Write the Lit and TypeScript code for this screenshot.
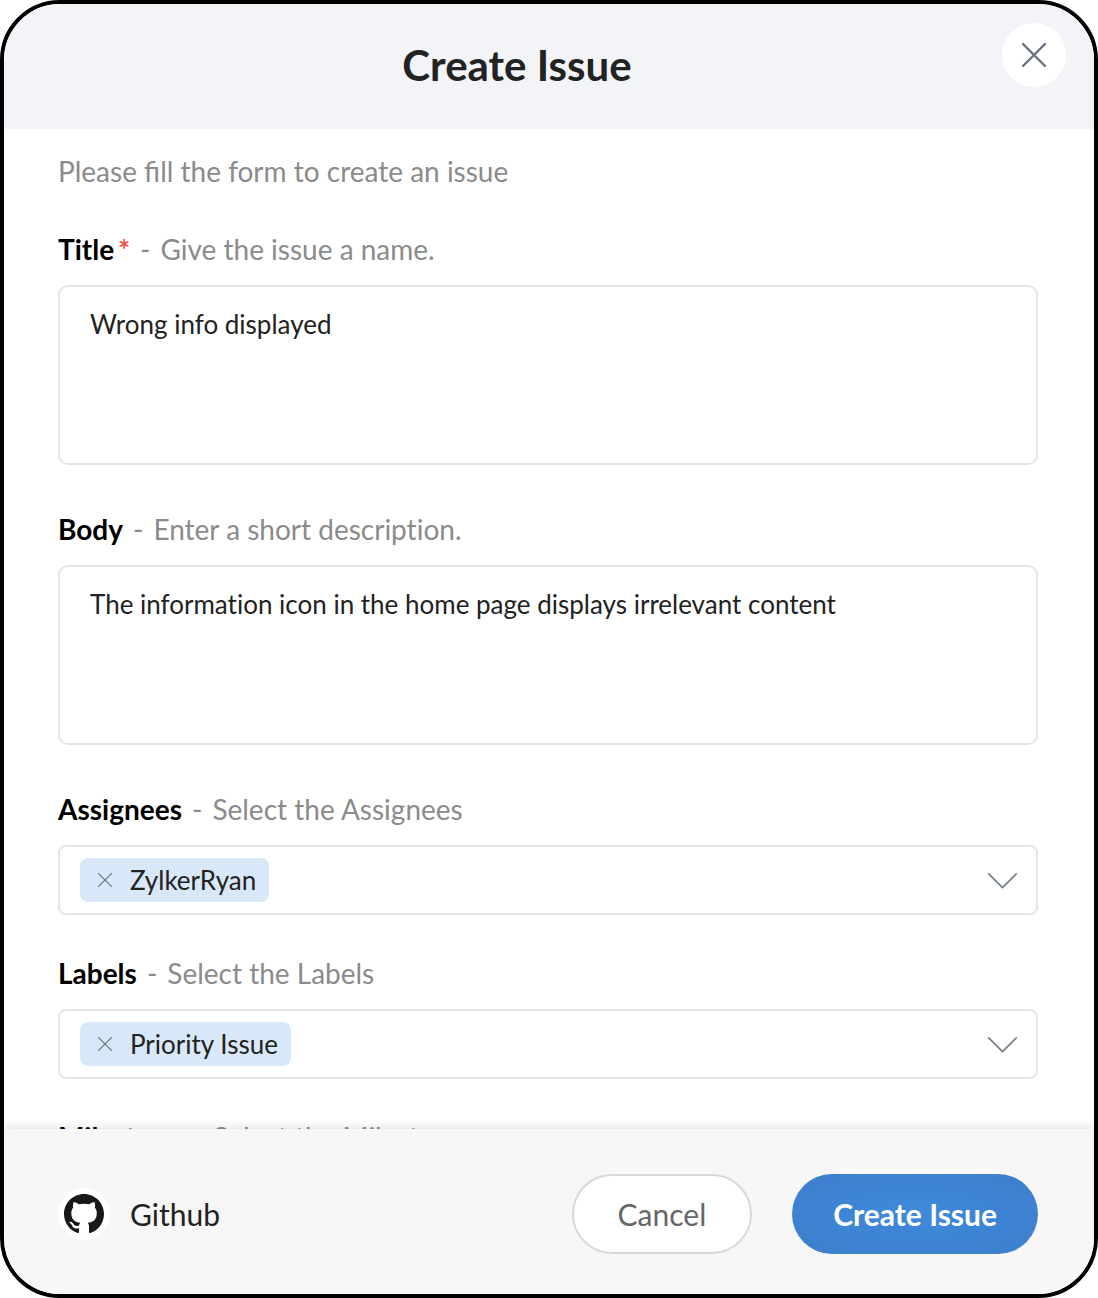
import { LitElement, html, css, svg } from "lit";
import { customElement, property, state } from "lit/decorators.js";

const crossIcon = (size: number, stroke: number) => svg`
  <svg width=${size} height=${size} viewBox="0 0 24 24" fill="none" stroke="currentColor"
    stroke-width=${stroke} stroke-linecap="round" aria-hidden="true">
    <path d="M1 1L23 23M23 1L1 23" />
  </svg>`;

/** Heading of a field: bold name, optional asterisk, grey hint. */
const labelStyles = css`
  :host {
    display: block;
    font-variant-ligatures: no-common-ligatures;
  }
  .label {
    display: block;
    margin-bottom: 18px;
    font-size: 28px;
    line-height: 36px;
    color: #8b8b8b;
  }
  .name {
    color: #000;
    font-weight: 700;
  }
  .star {
    margin-left: 4px;
    color: #ef5350;
    font-weight: 700;
  }
  .dash {
    margin: 0 10px;
  }
`;

const labelText = (name: string, hint: string, required = false) => html`
  <span class="name">${name}</span>${required ? html`<span class="star">*</span>` : ""}<span
    class="dash">-</span><span>${hint}</span>
`;

@customElement("text-field")
export class TextField extends LitElement {
  @property() name = "";
  @property() hint = "";
  @property() value = "";
  @property({ type: Boolean }) required = false;

  static styles = [
    labelStyles,
    css`
      .box {
        display: block;
        box-sizing: border-box;
        width: 100%;
        height: 180px;
        margin: 0;
        padding: 20px 30px;
        border: 2px solid #e5e5e5;
        border-radius: 10px;
        outline: none;
        resize: none;
        background: #fff;
        color: #222;
        font-family: inherit;
        font-size: 26px;
        font-variant-ligatures: inherit;
        line-height: 34px;
      }
      .box:focus-visible {
        border-color: #3f86d8;
      }
    `,
  ];

  render() {
    return html`
      <label class="label" for="control">${labelText(this.name, this.hint, this.required)}</label>
      <textarea class="box" id="control" ?required=${this.required} .value=${this.value}></textarea>
    `;
  }
}

@customElement("chip-select")
export class ChipSelect extends LitElement {
  @property() name = "";
  @property() hint = "";
  @property({ attribute: false }) options: string[] = [];
  @property({ attribute: false }) chosen: string[] = [];

  static styles = [
    labelStyles,
    css`
      .field {
        display: flex;
        align-items: center;
        gap: 10px;
        min-height: 44px;
        padding: 11px 18px 11px 20px;
        border: 2px solid #e5e5e5;
        border-radius: 8px;
        background: #fff;
      }
      .field:focus-within {
        border-color: #3f86d8;
      }
      .chip {
        display: flex;
        align-items: center;
        height: 44px;
        padding-right: 13px;
        border-radius: 8px;
        background: #d9e8f9;
        color: #222;
        font-size: 26px;
        line-height: 34px;
        white-space: nowrap;
      }
      .remove {
        display: grid;
        place-items: center;
        width: 50px;
        height: 44px;
        padding: 0;
        border: 0;
        background: none;
        color: #6b7785;
        cursor: pointer;
      }
      .picker {
        display: grid;
        flex: 1;
        align-items: center;
        min-width: 30px;
      }
      .select,
      .chevron {
        grid-area: 1 / 1;
      }
      .select {
        width: 100%;
        height: 44px;
        border: 0;
        outline: none;
        appearance: none;
        background: none;
        font: inherit;
        cursor: pointer;
      }
      .chevron {
        justify-self: end;
        overflow: visible;
        color: #75808c;
        pointer-events: none;
      }
    `,
  ];

  private add(event: Event) {
    const select = event.target as HTMLSelectElement;
    if (select.value) this.chosen = [...this.chosen, select.value];
    select.value = "";
  }

  private remove(item: string) {
    this.chosen = this.chosen.filter((entry) => entry !== item);
  }

  render() {
    const free = this.options.filter((option) => !this.chosen.includes(option));
    return html`
      <label class="label" for="control">${labelText(this.name, this.hint)}</label>
      <div class="field">
        ${this.chosen.map(
          (item) => html`<span class="chip"
            ><button class="remove" type="button" aria-label="Remove ${item}"
              @click=${() => this.remove(item)}>${crossIcon(14, 2.2)}</button
            >${item}</span
          >`
        )}
        <div class="picker">
          <select class="select" id="control" @change=${this.add}>
            <option value=""></option>
            ${free.map((option) => html`<option value=${option}>${option}</option>`)}
          </select>
          <svg class="chevron" width="30" height="16" viewBox="0 0 30 16" fill="none"
            stroke="currentColor" stroke-width="1.7" stroke-linecap="round" stroke-linejoin="round"
            aria-hidden="true">
            <path d="M0.7 1.8L14.5 15.6L28.3 1.8" />
          </svg>
        </div>
      </div>
    `;
  }
}

@customElement("app-root")
export class AppRoot extends LitElement {
  @state() private assignees = ["ZylkerRyan"];
  @state() private labels = ["Priority Issue"];

  static styles = css`
    :host {
      display: block;
      font-family: Lato, "Liberation Sans", sans-serif;
    }
    .dialog {
      display: flex;
      flex-direction: column;
      box-sizing: border-box;
      height: 100vh;
      overflow: hidden;
      border: 4px solid #000;
      border-radius: 60px;
      background: #fff;
    }
    .header {
      display: flex;
      align-items: flex-start;
      padding: 19px 28px 38px;
      background: #f3f4f8;
    }
    .heading {
      flex: 1;
      margin: 0;
      padding-top: 16px;
      color: #222;
      font-size: 42px;
      font-weight: 700;
      line-height: 52px;
      text-align: center;
    }
    .close {
      display: grid;
      place-items: center;
      width: 64px;
      height: 64px;
      padding: 0;
      border: 0;
      border-radius: 50%;
      background: #fff;
      color: #667283;
      cursor: pointer;
    }
    .form {
      flex: 1;
      min-height: 0;
      overflow-y: auto;
      scrollbar-width: none;
      padding: 24px 56px 40px 54px;
    }
    .intro {
      margin: 0 0 42px;
      color: #8b8b8b;
      font-size: 28px;
      line-height: 36px;
    }
    .text {
      margin-bottom: 46px;
    }
    .choice {
      margin-bottom: 40px;
    }
    .footer {
      position: relative;
      display: flex;
      align-items: center;
      gap: 40px;
      padding: 45px 56px 40px 54px;
      background: #f7f7f7;
      box-shadow: 0 0 10px rgba(0, 0, 0, 0.16);
    }
    .source {
      display: flex;
      flex: 1;
      align-items: center;
      gap: 20px;
      color: #222;
      font-size: 30px;
      line-height: 40px;
    }
    .badge {
      display: grid;
      place-items: center;
      width: 52px;
      height: 52px;
      border-radius: 50%;
      background: #fff;
      color: #191717;
    }
    .button {
      box-sizing: border-box;
      height: 80px;
      border: 0;
      border-radius: 40px;
      font-family: inherit;
      font-size: 30px;
      line-height: 40px;
      cursor: pointer;
    }
    .cancel {
      padding: 0 44px;
      border: 2px solid #d5d9dd;
      background: #fff;
      color: #666;
    }
    .submit {
      padding: 0 41px;
      background: radial-gradient(#3f89dc, #3d7ecb);
      color: #fff;
      font-weight: 700;
    }
  `;

  render() {
    return html`
      <form class="dialog" @submit=${(event: Event) => event.preventDefault()}>
        <header class="header">
          <h1 class="heading">Create Issue</h1>
          <button class="close" type="button" aria-label="Close">${crossIcon(24, 2.4)}</button>
        </header>
        <main class="form">
          <p class="intro">Please fill the form to create an issue</p>
          <text-field class="text" name="Title" hint="Give the issue a name." required
            value="Wrong info displayed"></text-field>
          <text-field class="text" name="Body" hint="Enter a short description."
            value="The information icon in the home page displays irrelevant content"></text-field>
          <chip-select class="choice" name="Assignees" hint="Select the Assignees"
            .options=${this.assignees} .chosen=${this.assignees}></chip-select>
          <chip-select class="choice" name="Labels" hint="Select the Labels"
            .options=${this.labels} .chosen=${this.labels}></chip-select>
          <chip-select name="Milestone" hint="Select the Milestone"></chip-select>
        </main>
        <footer class="footer">
          <div class="source">
            <span class="badge">
              <svg width="40" height="40" viewBox="0 0 16 16" fill="currentColor" aria-hidden="true">
                <path d="M8 0C3.58 0 0 3.58 0 8c0 3.54 2.29 6.53 5.47 7.59.4.07.55-.17.55-.38 0-.19-.01-.82-.01-1.49-2.01.37-2.53-.49-2.69-.94-.09-.23-.48-.94-.82-1.13-.28-.15-.68-.52-.01-.53.63-.01 1.08.58 1.23.82.72 1.21 1.87.87 2.33.66.07-.52.28-.87.51-1.07-1.78-.2-3.64-.89-3.64-3.95 0-.87.31-1.59.82-2.15-.08-.2-.36-1.02.08-2.12 0 0 .67-.21 2.2.82.64-.18 1.32-.27 2-.27s1.36.09 2 .27c1.53-1.04 2.2-.82 2.2-.82.44 1.1.16 1.92.08 2.12.51.56.82 1.27.82 2.15 0 3.07-1.87 3.75-3.65 3.95.29.25.54.73.54 1.48 0 1.07-.01 1.93-.01 2.2 0 .21.15.46.55.38A8.01 8.01 0 0 0 16 8c0-4.42-3.58-8-8-8z" />
              </svg>
            </span>
            <span>Github</span>
          </div>
          <button class="button cancel" type="button">Cancel</button>
          <button class="button submit" type="submit">Create Issue</button>
        </footer>
      </form>
    `;
  }
}
